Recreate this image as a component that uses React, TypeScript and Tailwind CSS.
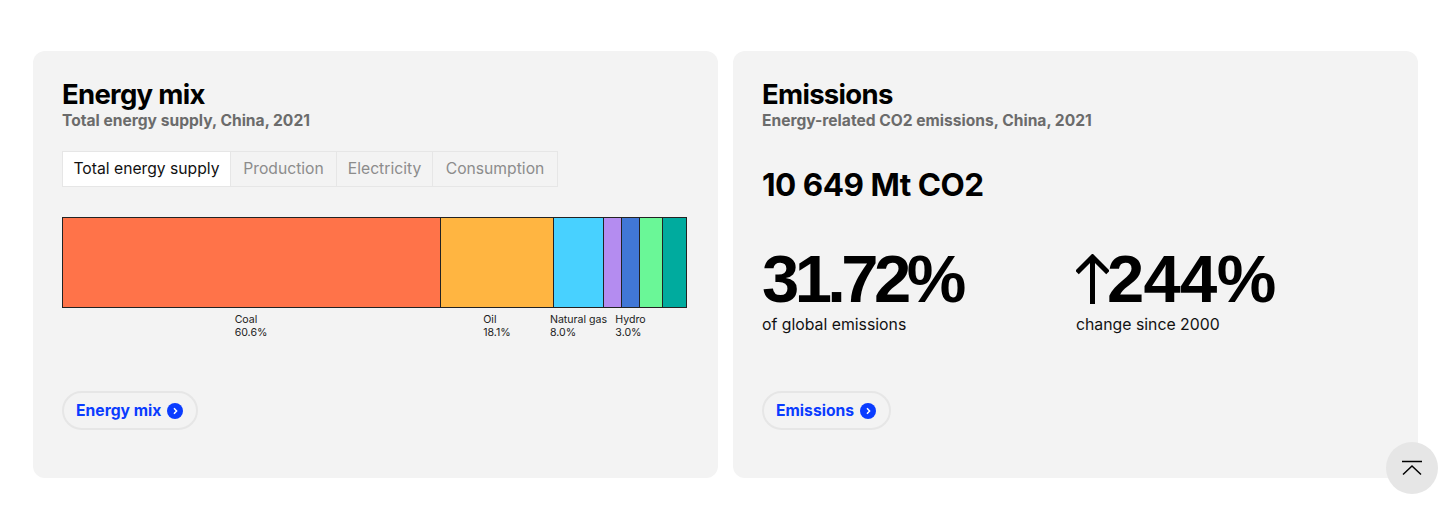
import React from "react";

const segments = [
  { width: "w-[379px]", color: "bg-[#ff7349]", label: "Coal", value: "60.6%" },
  { width: "w-[113px]", color: "bg-[#ffb541]", label: "Oil", value: "18.1%" },
  { width: "w-[50px]", color: "bg-[#48d1ff]", label: "Natural gas", value: "8.0%" },
  { width: "w-[18px]", color: "bg-[#b48cf0]", label: "", value: "" },
  { width: "w-[18px]", color: "bg-[#4177d6]", label: "Hydro", value: "3.0%" },
  { width: "w-[23px]", color: "bg-[#6af797]", label: "", value: "" },
  { width: "w-[24px]", color: "bg-[#00ab9e]", label: "", value: "" },
];

const tabs = [
  { title: "Production", width: "w-[106px]" },
  { title: "Electricity", width: "w-[96px]" },
  { title: "Consumption", width: "w-[125px]" },
];

const ChevronBadge = () => (
  <span className="flex h-4 w-4 items-center justify-center rounded-full bg-[#0a3cff]">
    <svg width="8" height="8" viewBox="0 0 8 8" fill="none">
      <path d="M3 1.2L5.6 4L3 6.8" stroke="white" strokeWidth="1.5" />
    </svg>
  </span>
);

const PillLink = ({ title }: { title: string }) => (
  <a className="flex h-[39px] w-fit items-center gap-[6px] rounded-full border-2 border-[#e6e6e6] pl-[12px] pr-[13px] text-[15.7px] font-bold text-[#0a3cff]">
    {title}
    <ChevronBadge />
  </a>
);

const CardHeader = ({ title, subtitle }: { title: string; subtitle: string }) => (
  <>
    <h2 className="text-[27.5px] font-bold leading-[33px] tracking-[-0.7px] text-black">{title}</h2>
    <p className="text-[15.6px] font-bold leading-[20px] text-[#6b6b6b]">{subtitle}</p>
  </>
);

const Stat = ({
  value,
  caption,
  arrow,
  tracking,
}: {
  value: string;
  caption: string;
  arrow?: boolean;
  tracking: string;
}) => (
  <div className="flex w-[314px] flex-col">
    <div
      className={`${tracking} flex h-[64px] items-center font-['Liberation_Sans',sans-serif] text-[67px] font-bold leading-[64px] text-black`}
    >
      {arrow && (
        <svg width="33" height="50" viewBox="0 0 33 50" fill="none" className="-mr-[2px] shrink-0">
          <path d="M16.5 50V3M1 18.5L16.5 3L32 18.5" stroke="black" strokeWidth="5" />
        </svg>
      )}
      {value}
    </div>
    <p className="mt-[4px] text-[15.8px] leading-[20px] text-[#111]">{caption}</p>
  </div>
);

export default function App() {
  return (
    <div className="relative h-[521px] w-[1456px] overflow-hidden bg-white pl-[33px] pt-[51px] font-['Inter',sans-serif]">
      <div className="flex gap-[15px]">
        <section className="h-[427px] w-[685px] rounded-[12px] bg-[#f3f3f3] pl-[29px] pt-[27px]">
          <CardHeader title="Energy mix" subtitle="Total energy supply, China, 2021" />

          <div className="mt-[20px] flex h-[36px] w-fit border border-[#e6e6e6] text-[15.7px] text-[#8c8c8c]">
            <div className="flex w-[167px] items-center justify-center bg-white pb-[1px] text-[#111]">
              Total energy supply
            </div>
            {tabs.map((tab) => (
              <div
                key={tab.title}
                className={`${tab.width} flex items-center justify-center border-l border-[#e6e6e6] pb-[1px]`}
              >
                {tab.title}
              </div>
            ))}
          </div>

          <div className="mt-[30px] flex h-[91px] w-[625px] border-y border-[#222]">
            {segments.map((s, i) => (
              <div
                key={i}
                className={`${s.width} ${s.color} shrink-0 border-r border-[#222] first:border-l`}
              />
            ))}
          </div>
          <div className="-ml-[0.5px] mt-[5px] flex w-[625px] text-[10.6px] leading-[13px] text-[#222]">
            {segments.map((s, i) => (
              <div key={i} className={`${s.width} flex shrink-0 justify-center`}>
                <div className="shrink-0 whitespace-nowrap">
                  {s.label}
                  <br />
                  {s.value}
                </div>
              </div>
            ))}
          </div>

          <div className="mt-[52px]">
            <PillLink title="Energy mix" />
          </div>
        </section>

        <section className="h-[427px] w-[685px] rounded-[12px] bg-[#f3f3f3] pl-[29px] pt-[27px]">
          <CardHeader title="Emissions" subtitle="Energy-related CO2 emissions, China, 2021" />

          <p className="mt-[34px] text-[31.5px] font-bold leading-[40px] tracking-[-0.5px] text-black">
            10 649 Mt CO2
          </p>

          <div className="mt-[42px] flex">
            <Stat tracking="tracking-[-4.6px]" value="31.72%" caption="of global emissions" />
            <Stat tracking="tracking-[-0.7px]" arrow value="244%" caption="change since 2000" />
          </div>

          <div className="mt-[56px]">
            <PillLink title="Emissions" />
          </div>
        </section>
      </div>

      <button className="absolute left-[1386px] top-[442px] flex h-[52px] w-[52px] items-center justify-center rounded-full bg-[#e6e6e6]">
        <svg width="22" height="16" viewBox="0 0 22 16" fill="none">
          <path d="M1 1.5H21M2 14.5L11 6L20 14.5" stroke="black" strokeWidth="1.5" />
        </svg>
      </button>
    </div>
  );
}
